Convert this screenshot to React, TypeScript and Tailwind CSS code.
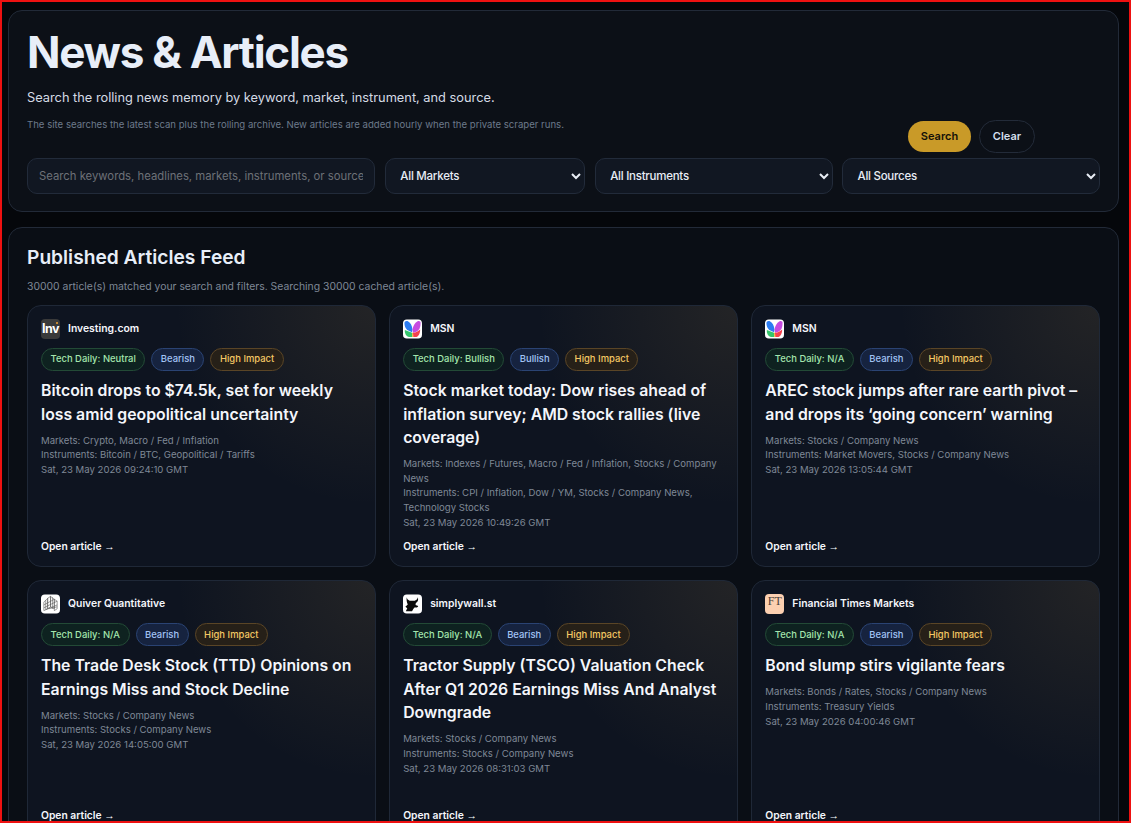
const font = { fontFamily: "Inter, 'Noto Sans', sans-serif" };

function InvLogo() {
  return (
    <span className="relative flex h-5 w-[19px] flex-none items-center justify-center rounded-[4px] bg-[#3a3a3a] text-[12.5px] font-bold tracking-[-0.6px] text-white">
      Inv
      <span className="absolute right-[2.5px] top-[3px] h-[2px] w-[2px] rounded-full bg-[#f0a030]" />
    </span>
  );
}

function MsnLogo() {
  return (
    <svg viewBox="0 0 20 20" className="h-5 w-[19px] flex-none">
      <rect width="20" height="20" rx="4" fill="#fff" />
      <path d="M1.500 4C1.500 2 3.500 1 5.500 2c2.500 1.200 4 4.500 4.500 8.500l-.5 3L4.500 11C2.500 9.500 1.500 6.500 1.500 4z" fill="#2b7cf2" />
      <path d="M18.500 3.500c0-1.500-1.500-2.500-3.500-1.500-2.500 1.500-4.500 4.500-5 8.500l.5 3.500c3-.5 5.500-1.500 7-4.500.8-1.800 1-4.200 1-6z" fill="#c64be0" />
      <path d="M2 11l7.500 3 .3 4.500H6.500C3.500 18 1.500 14.500 2 11z" fill="#35c56c" />
      <path d="M10.500 14c3-.2 5.500-1.500 7.500-3.500.3 3.500-1.500 7-4 8h-3.300z" fill="#f5414f" />
      <path d="M9.500 14l1 0 .5 4.500H9.800z" fill="#f5b52e" />
    </svg>
  );
}

function QuiverLogo() {
  return (
    <svg viewBox="0 0 20 20" className="h-5 w-[19px] flex-none">
      <rect width="20" height="20" rx="4" fill="#fff" />
      <g fill="none" stroke="#555" strokeWidth=".6">
        <path d="M3 8l4-4v11l-4 2zM7 4l3-2v11l-3 2zM10 2l4 3v10l-4-2zM14 5l3 2v8l-3 2z" />
        <path d="M3 11l11-6M3 14l14-7M5 16l12-5M8 15l9-2M5 6v10M12 3v12" />
      </g>
    </svg>
  );
}

function SimplyLogo() {
  return (
    <svg viewBox="0 0 20 20" className="h-5 w-[19px] flex-none">
      <rect width="20" height="20" rx="4" fill="#fff" />
      <path d="M4 3c.2 1.800 1.300 3 3 3.500h5.500c1.700-.5 2.800-1.700 3-3.500 1 2.500.2 5-2 6l-.3 2 2.800 1c-.5 1.500-2 2-3.500 1.500L11 15l-1.500 2.500H3l1.500-3L2.500 13 5 10.500C4 8.500 3.400 5.500 4 3z" fill="#0b0b0b" />
    </svg>
  );
}

function FtLogo() {
  return (
    <span
      className="flex h-5 w-[19px] flex-none items-start justify-center rounded-[4px] bg-[#fcd0b1] pt-[1px] text-[12px] leading-[13px] text-[#4a4038]"
      style={{ fontFamily: "'Liberation Serif', serif" }}
    >
      FT
    </span>
  );
}

const articles = [
  {
    logo: <InvLogo />,
    source: "Investing.com",
    tech: "Tech Daily: Neutral",
    bias: "Bearish",
    title: "Bitcoin drops to $74.5k, set for weekly loss amid geopolitical uncertainty",
    markets: "Markets: Crypto, Macro / Fed / Inflation",
    instruments: "Instruments: Bitcoin / BTC, Geopolitical / Tariffs",
    date: "Sat, 23 May 2026 09:24:10 GMT",
  },
  {
    logo: <MsnLogo />,
    source: "MSN",
    tech: "Tech Daily: Bullish",
    bias: "Bullish",
    title: "Stock market today: Dow rises ahead of inflation survey; AMD stock rallies (live coverage)",
    markets: "Markets: Indexes / Futures, Macro / Fed / Inflation, Stocks / Company News",
    instruments: "Instruments: CPI / Inflation, Dow / YM, Stocks / Company News, Technology Stocks",
    date: "Sat, 23 May 2026 10:49:26 GMT",
  },
  {
    logo: <MsnLogo />,
    source: "MSN",
    tech: "Tech Daily: N/A",
    bias: "Bearish",
    title: "AREC stock jumps after rare earth pivot – and drops its ‘going concern’ warning",
    markets: "Markets: Stocks / Company News",
    instruments: "Instruments: Market Movers, Stocks / Company News",
    date: "Sat, 23 May 2026 13:05:44 GMT",
  },
  {
    logo: <QuiverLogo />,
    source: "Quiver Quantitative",
    tech: "Tech Daily: N/A",
    bias: "Bearish",
    title: "The Trade Desk Stock (TTD) Opinions on Earnings Miss and Stock Decline",
    markets: "Markets: Stocks / Company News",
    instruments: "Instruments: Stocks / Company News",
    date: "Sat, 23 May 2026 14:05:00 GMT",
  },
  {
    logo: <SimplyLogo />,
    source: "simplywall.st",
    tech: "Tech Daily: N/A",
    bias: "Bearish",
    title: "Tractor Supply (TSCO) Valuation Check After Q1 2026 Earnings Miss And Analyst Downgrade",
    markets: "Markets: Stocks / Company News",
    instruments: "Instruments: Stocks / Company News",
    date: "Sat, 23 May 2026 08:31:03 GMT",
  },
  {
    logo: <FtLogo />,
    source: "Financial Times Markets",
    tech: "Tech Daily: N/A",
    bias: "Bearish",
    title: "Bond slump stirs vigilante fears",
    markets: "Markets: Bonds / Rates, Stocks / Company News",
    instruments: "Instruments: Treasury Yields",
    date: "Sat, 23 May 2026 04:00:46 GMT",
  },
];

const badge = "flex h-[23px] items-center rounded-full border px-[8.500px] text-[9.450px] font-medium";
const select =
  "h-9 w-full rounded-[10px] border border-[#222b3a] bg-[#111722] px-[10.500px] text-[11.500px] font-medium tracking-[-0.25px] text-[#e8edf5]";

function ArticleCard({ a }: { a: (typeof articles)[number] }) {
  return (
    <article className="flex min-h-[255px] flex-col rounded-[14px] border border-[#1f2837] bg-[#0e1420] bg-[radial-gradient(circle_at_100%_0%,rgba(190,150,80,0.12),rgba(190,150,80,0)_46%)] px-[13px] pb-[11px] pt-[13px]">
      <div className="flex items-center gap-[8px]">
        {a.logo}
        <span className="text-[10.400px] font-semibold text-[#f4f6fb]">{a.source}</span>
      </div>
      <div className="mt-[9px] flex gap-[6px]">
        <span className={`${badge} border-[#234a36] bg-[#0e2220] text-[#a4e6ad]`}>{a.tech}</span>
        <span className={`${badge} border-[#2a4373] bg-[#16233f] text-[#a3c4f6]`}>{a.bias}</span>
        <span className={`${badge} border-[#5a4526] bg-[#262018] text-[#f4c864]`}>High Impact</span>
      </div>
      <h3 className="mt-[8px] text-[15.800px] font-semibold leading-[23.500px] text-[#f4f6fb]">{a.title}</h3>
      <div className="mb-[8.700px] mt-[7.500px] text-[9.600px] leading-[14.700px] text-[#7f8896]">
        <p>{a.markets}</p>
        <p>{a.instruments}</p>
        <p>{a.date}</p>
      </div>
      <a className="mt-auto text-[10.300px] font-semibold text-[#f4f6fb]">
        Open article <span className="font-['Liberation_Sans']">→</span>
      </a>
    </article>
  );
}

export default function App() {
  return (
    <div className="relative h-screen overflow-hidden bg-[#05070b] px-[8px] pr-[12px] pt-[10px]" style={font}>
      <section className="rounded-[14px] border border-[#222a38] bg-[#0c1017] px-[18px] pb-[17px] pt-[13px]">
        <h1 className="text-[44px] font-bold leading-[56px] tracking-[-1.270px] text-[#e8eef8]">News &amp; Articles</h1>
        <p className="mt-[8px] text-[12.800px] leading-[20px] text-[#d5dbe5]">
          Search the rolling news memory by keyword, market, instrument, and source.
        </p>
        <div className="flex items-start justify-between pr-[65px]">
          <p className="mt-[10px] text-[9.600px] leading-[14px] text-[#6d7a8b]">
            The site searches the latest scan plus the rolling archive. New articles are added hourly when the private scraper runs.
          </p>
          <div className="mt-[12px] flex items-center gap-[8px]">
            <button className="h-[31px] w-[63px] rounded-full bg-[#c99a28] text-[11px] font-semibold text-[#141008]">Search</button>
            <button className="h-[33px] w-[56px] rounded-full border border-[#232b39] text-[11px] font-semibold text-[#d5dfee]">Clear</button>
          </div>
        </div>
        <div className="mt-[5px] grid grid-cols-[348.500px_200.500px_238px_258px] gap-[9.330px]">
          <input
            className="h-9 w-[348px] rounded-[10px] border border-[#222b3a] bg-[#111722] px-[11px] text-[11.300px] text-[#e8edf5] placeholder:text-[#6d7178]"
            placeholder="Search keywords, headlines, markets, instruments, or sources"
          />
          <select className={select}><option>All Markets</option></select>
          <select className={select}><option>All Instruments</option></select>
          <select className={select}><option>All Sources</option></select>
        </div>
      </section>

      <section className="mt-[15px] rounded-[14px] border border-[#222a38] bg-[#0a0e15] px-[18px] pt-[16px]">
        <h2 className="text-[19.200px] font-semibold leading-[26px] text-[#e8eef8]">Published Articles Feed</h2>
        <p className="mt-[9px] text-[10.400px] leading-[16px] text-[#7f8896]">
          30000 article(s) matched your search and filters. Searching 30000 cached article(s).
        </p>
        <div className="mt-[10px] grid grid-cols-3 gap-[13.500px]">
          {articles.map((a) => (
            <ArticleCard key={a.title} a={a} />
          ))}
        </div>
      </section>

      <div className="pointer-events-none fixed inset-0 border-2 border-[#ee1111]" />
    </div>
  );
}
